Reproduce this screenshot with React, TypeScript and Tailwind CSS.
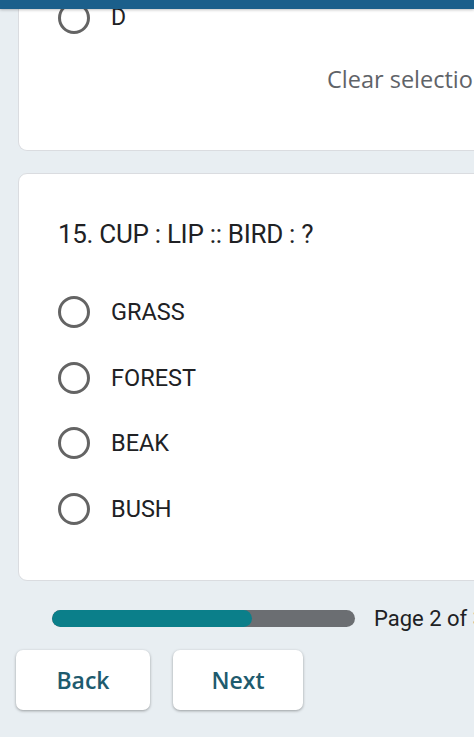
import React from "react";

function Radio() {
  return <div className="w-[32px] h-[32px] rounded-full border-[3px] border-[#646464] shrink-0" />;
}

function Option({ label }: { label: string }) {
  return (
    <div className="flex items-center h-[65.7px]">
      <Radio />
      <span className="ml-[21px] text-[23.5px] leading-[28px] text-[#202124]" style={{ fontFamily: "Roboto, sans-serif" }}>
        {label}
      </span>
    </div>
  );
}

export default function App() {
  return (
    <div className="relative w-[474px] h-[737px] overflow-hidden bg-[#e8eef2]" style={{ fontFamily: "Roboto, sans-serif" }}>
      <div className="absolute top-0 left-0 right-0 h-[9px] bg-[#1b5f8b] shadow-[0_1px_3px_rgba(0,0,0,0.25)] z-10" />
      <div className="ml-[18px] w-[480px] bg-white rounded-b-[9px] border border-t-0 border-[#dadce0] pl-[39px] pt-[2px] pb-[57px]">
        <div className="flex items-center h-[32px]">
          <Radio />
          <span className="ml-[21px] text-[23px] leading-[28px] text-[#202124]">D</span>
        </div>
        <div className="mt-[31px] pl-[269px] text-[23.5px] leading-[28px] text-[#5f6368] whitespace-nowrap" style={{ fontFamily: "'Open Sans', sans-serif" }}>
          Clear selection
        </div>
      </div>
      <div className="mt-[22px] ml-[18px] w-[480px] bg-white rounded-[9px] border border-[#dadce0] pl-[39px] pt-[44px] pb-[38px]">
        <div className="text-[26px] leading-[32px] text-[#202124] tracking-[-0.3px] whitespace-nowrap">15. CUP : LIP :: BIRD : ?</div>
        <div className="mt-[29px] flex flex-col">
          <Option label="GRASS" />
          <Option label="FOREST" />
          <Option label="BEAK" />
          <Option label="BUSH" />
        </div>
      </div>
      <div className="mt-[24px] flex items-center pl-[52px]">
        <div className="w-[303px] h-[17px] shrink-0 rounded-full bg-[#6b6e72] overflow-hidden">
          <div className="h-full w-[200px] rounded-full bg-[#0b7f8a]" />
        </div>
        <span className="ml-[19px] text-[22px] leading-[28px] text-[#202124] whitespace-nowrap">Page 2 of 3</span>
      </div>
      <div className="mt-[17px] flex pl-[16px] gap-[23px]">
        <div className="w-[134px] h-[60px] bg-white rounded-[7px] shadow-[0_1px_3px_rgba(0,0,0,0.35)] flex items-center justify-center text-[23px] font-semibold text-[#1e5b6e]" style={{ fontFamily: "'Open Sans', sans-serif" }}>
          Back
        </div>
        <div className="w-[130px] h-[60px] bg-white rounded-[7px] shadow-[0_1px_3px_rgba(0,0,0,0.35)] flex items-center justify-center text-[23px] font-semibold text-[#1e5b6e]" style={{ fontFamily: "'Open Sans', sans-serif" }}>
          Next
        </div>
      </div>
    </div>
  );
}
